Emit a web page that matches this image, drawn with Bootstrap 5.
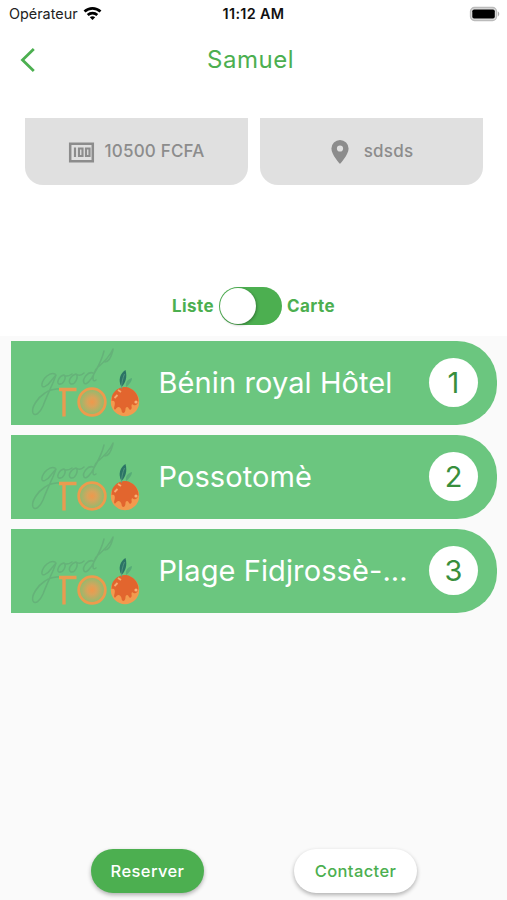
<!DOCTYPE html>
<html lang="fr">
<head>
<meta charset="utf-8">
<meta name="viewport" content="width=device-width, initial-scale=1">
<title>Samuel</title>
<link href="https://cdn.jsdelivr.net/npm/bootstrap@5.3.0/dist/css/bootstrap.min.css" rel="stylesheet">
<style>
body{font-family:Inter,"Liberation Sans",sans-serif;color:#222;background:#fff}
.screen{height:900px}
.status{height:28px;padding:0 7px 0 9px;font-size:14.4px;line-height:28px}
.status-time{font-size:14.4px;letter-spacing:.35px;color:#111;margin-right:2px}
.appbar{height:64px;padding-left:20px;padding-right:26px}
.appbar-title{font-size:24px;line-height:64px;color:#4caf50;letter-spacing:.5px}
.side{width:50px}
.infos{margin:26px 24px 0 25px;gap:12px}
.info{height:67px;background:#e0e0e0;border-radius:0 0 18px 18px;color:#8c8c8c;font-size:17px;font-weight:500;letter-spacing:.2px}
.info-price{padding-right:3px}
.info-pin{margin-right:14px}
.switch-row{margin-top:102px;height:38px;gap:5px;color:#4caf50;font-size:17px;font-weight:700;letter-spacing:.4px}
.switch-row span{padding-top:2px}
.toggle{width:63px;height:38px;border-radius:19px;background:#4caf50;padding:1px}
.knob{width:36px;height:36px;border-radius:50%;background:#fff;box-shadow:1px 1px 3px rgba(0,0,0,.3)}
.list-area{margin-top:11px;background:#fafafa;padding:4.5px 10px 0 10.5px}
.places{gap:10px}
.place{height:84px;background:#6bc67f;border-radius:0 40px 40px 0;padding-right:19px}
.logo{width:148px;height:84px}
.place-name{font-size:29px;line-height:40px;color:#fff;letter-spacing:.1px}
.num{width:49px;height:49px;margin-left:12px;border-radius:50%;background:#fff;color:#388e3c;font-size:29px;line-height:49px}
.pill{height:44px;border-radius:22px;padding:0;font-size:16.500px;font-weight:500;letter-spacing:.4px;border:0;box-shadow:0 2px 4px rgba(0,0,0,.3)}
.pill-main{width:113px;background:#4caf50;color:#fff}
.pill-alt{width:123px;background:#fff;color:#4caf50}
.actions{padding:0 90px 7px 91px;background:#fafafa}
</style>
</head>
<body>
<svg width="0" height="0" class="position-absolute" aria-hidden="true">
<defs>
<radialGradient id="slice"><stop offset="0" stop-color="#f0984b"/><stop offset=".35" stop-color="#d8a45b"/><stop offset="1" stop-color="#8abd71"/></radialGradient>
<symbol id="brand" viewBox="0 0 148 84">
<g fill="none" stroke="#65b279" stroke-width="1.500" stroke-linecap="round" stroke-linejoin="round">
<path d="M44 33c-5-2-12 4-13 10-1 5 5 3 9-3l5-6c-3 9-9 20-13 31-3 7-8 11-10 7-2-5 4-15 12-20 5-4 12-5 24-4"/>
<path d="M53 34c-5 1-8 8-5 9 4 1 8-6 5-9 2 2 5 1 8-1M65 33c-5 1-9 8-5 10 4 1 8-7 5-10 3 2 6 1 8-1M82 32c-5-2-11 6-9 10 2 3 7-3 10-9 4-7 8-14 10-23M85 28c-4 8-4 14 0 11M86 27c6-5 13-12 16-19M94 21c3 0 6-4 8-12"/>
</g>
<path d="M48 48.500h17.500M53 48.500v27" stroke="#e99b50" stroke-width="3.400" fill="none"/>
<circle cx="81" cy="61" r="13.300" fill="url(#slice)" stroke="#ed9b4d" stroke-width="2.800"/>
<path d="M115 46c3-2 6-6 6-9-4 1-7 4-6 9z" fill="#58ac78"/>
<circle cx="114" cy="61" r="14.200" fill="#f29a4e"/>
<path d="M101 55c3-7 8-9 14-9 7 1 12.500 7 12.500 14-1 4-3 5-5 4-1-1-2-1-2 1 1 4-2 5-3 2-1-2-3-1-3 1 0 5-4 5-4 1-1-3-3-4-5-2-2 3-3 1-2-2 1-4 0-6-3-5z" fill="#e2652e"/>
<path d="M103.500 57l3-3M107 49l3 2" stroke="#f3ac70" stroke-width="1.800"/>
<circle cx="125" cy="61" r="1.600" fill="#f6b277"/>
<path d="M110.500 46c-4-7-1-14 4-17 2 7 0 13-4 17z" fill="#2b7465"/>
<path d="M110.500 48c0-6 1-10 3-15" fill="none" stroke="#60a186" stroke-width=".7"/>
</symbol>
</defs>
</svg>
<main class="screen d-flex flex-column overflow-hidden">
<div class="status d-flex align-items-center">
<div class="col d-flex align-items-center gap-1"><span>Opérateur</span>
<svg width="21" height="16" viewBox="0 0 21 16" fill="none" stroke="#000" stroke-width="2.700"><path d="M2.500 5.500c4.600-4.300 11.400-4.300 16 0M5.700 8.900c2.700-2.500 6.900-2.500 9.600 0"/><path d="M7.800 11.300c1.500-1.300 3.900-1.300 5.400 0L10.500 14.100z" fill="#000" stroke="none"/></svg></div>
<div class="status-time fw-semibold">11:12 AM</div>
<div class="col d-flex justify-content-end"><svg width="31" height="16" viewBox="0 0 31 16"><rect x="1.500" y="1.500" width="26" height="13" rx="4" fill="#ddd" stroke="#bbb" stroke-width="1.300"/><rect x="3.300" y="3.500" width="22.500" height="9" rx="1.800"/><path d="M28.800 5.300q3 2.700 0 5.400z" fill="#aaa"/></svg></div>
</div>
<header class="appbar d-flex justify-content-between align-items-center">
<div class="side d-flex"><svg width="17" height="26" viewBox="0 0 17 26" fill="none" stroke="#4caf50" stroke-width="2.800"><path d="M13.800 2 2.500 13l11.300 11"/></svg></div>
<h1 class="appbar-title m-0 fw-normal">Samuel</h1>
<div class="side"></div>
</header>
<section class="infos d-flex">
<div class="info info-price w-50 d-flex align-items-center justify-content-center"><svg class="me-2" width="31" height="26" viewBox="0 0 31 26" fill="none" stroke="#8c8c8c"><path stroke-width="2.500" d="M4.200 4.700h22.600v17.500H4.200z"/><path stroke-width="2.200" d="M9 8.500v9.500M13 9.500h3.500V17H13zM20 9.500h3.500V17H20z"/></svg>10500 FCFA</div>
<div class="info w-50 d-flex align-items-center justify-content-center"><svg class="info-pin" width="20" height="26" viewBox="0 0 20 26"><path fill="#8c8c8c" fill-rule="evenodd" d="M10 1a8.600 8.600 0 0 0-8.600 8.600C1.400 16 10 25 10 25s8.600-9 8.600-15.400A8.600 8.600 0 0 0 10 1zm0 5.400a3.100 3.100 0 1 1 0 6.200 3.100 3.100 0 0 1 0-6.200z"/></svg>sdsds</div>
</section>
<div class="switch-row d-flex align-items-center justify-content-center"><span>Liste</span><div class="toggle" role="switch" aria-checked="false"><div class="knob"></div></div><span>Carte</span></div>
<section class="list-area flex-grow-1 d-flex flex-column">
<div class="places d-flex flex-column">
<div class="place d-flex align-items-center"><svg class="logo flex-shrink-0"><use href="#brand"/></svg><div class="place-name col text-nowrap">Bénin royal Hôtel</div><div class="num flex-shrink-0 text-center">1</div></div>
<div class="place d-flex align-items-center"><svg class="logo flex-shrink-0"><use href="#brand"/></svg><div class="place-name col text-nowrap">Possotomè</div><div class="num flex-shrink-0 text-center">2</div></div>
<div class="place d-flex align-items-center"><svg class="logo flex-shrink-0"><use href="#brand"/></svg><div class="place-name col text-nowrap">Plage Fidjrossè-...</div><div class="num flex-shrink-0 text-center">3</div></div>
</div>
</section>
<footer class="actions d-flex justify-content-between"><button class="btn pill pill-main">Reserver</button><button class="btn pill pill-alt">Contacter</button></footer>
</main>
<script src="https://cdn.jsdelivr.net/npm/bootstrap@5.3.0/dist/js/bootstrap.bundle.min.js"></script>
</body>
</html>
